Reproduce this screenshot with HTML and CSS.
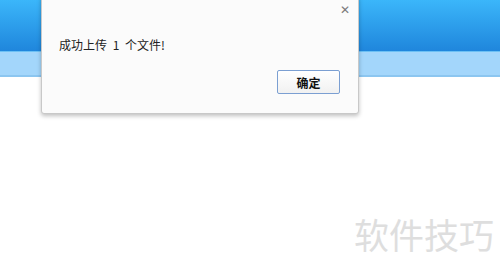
FILE: index.html
```html
<!DOCTYPE html>
<html lang="zh-CN">
<head>
    <meta charset="UTF-8">
    <meta name="viewport" content="width=device-width, initial-scale=1.0">
    <title>上传</title>
    <link rel="stylesheet" href="styles.css">
</head>
<body>

    <div class="header"></div>
    <div class="subbar"></div>

    <!-- 提示对话框 -->
    <div class="dialog">
        <span class="close">&#x2715;</span>
        <p class="message">成功上传 1 个文件!</p>
        <div class="actions">
            <button class="ok">确定</button>
        </div>
    </div>

    <div class="watermark">软件技巧</div>

</body>
</html>
```

FILE: styles.css
```css
body {
    margin: 0;
    background-color: #fff;
    font-family: "Noto Sans CJK SC", sans-serif;
    height: 273px;
    overflow: hidden;
}

.header {
    height: 51px;
    background: linear-gradient(to bottom, #3bb6fa, #1f86dc);
    border-bottom: 1px solid #6cc0f4;
}

.subbar {
    height: 23px;
    background-color: #a3d6fb;
    border-bottom: 2px solid #8cc6f0;
}

/* Dialog */
.dialog {
    position: absolute;
    top: -4px;
    left: 41px;
    width: 318px;
    height: 118px;
    background-color: #fbfbfb;
    border: 1px solid #c8c8c8;
    border-radius: 0 0 3px 3px;
    box-shadow: 0 2px 4px rgba(0, 0, 0, 0.25);
    box-sizing: border-box;
}

.close {
    position: absolute;
    top: 6px;
    right: 8px;
    font-size: 12px;
    font-weight: bold;
    color: #7a7a7a;
    font-family: "DejaVu Sans", sans-serif;
}

.message {
    margin: 40px 0 0 17px;
    font-size: 12px;
    color: #222;
    line-height: 16px;
    word-spacing: 3px;
}

.actions {
    display: flex;
    justify-content: flex-end;
    padding: 17px 18px 0 0;
}

.ok {
    width: 63px;
    height: 24px;
    font-family: "Noto Sans CJK SC", sans-serif;
    font-size: 12px;
    font-weight: bold;
    color: #111;
    background: linear-gradient(to bottom, #ffffff, #f1f1f1);
    border: 1px solid #7b9fd2;
    border-radius: 2px;
    padding: 0;
}

.watermark {
    position: absolute;
    left: 354px;
    top: 212px;
    font-size: 35px;
    color: #dedede;
    line-height: 44px;
}
```
